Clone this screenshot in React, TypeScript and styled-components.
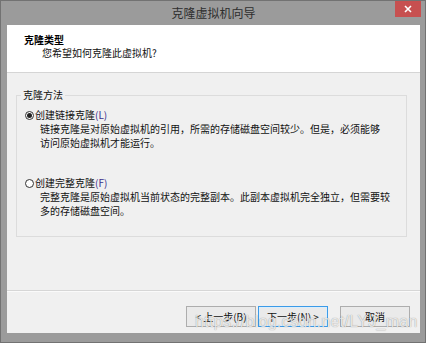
import React from 'react';
import styled, { createGlobalStyle } from 'styled-components';

const GlobalStyle = createGlobalStyle`
  html, body {
    margin: 0;
    padding: 0;
    background: #ffffff;
  }
  * {
    box-sizing: border-box;
  }
`;

const UI_FONT = `"Noto Sans CJK SC", "Noto Sans", sans-serif`;

// 窗口外框
const Window = styled.div`
  width: 426px;
  height: 343px;
  background: #9b9b9b;
  border: 1px solid #727272;
  padding: 0 5px 9px 6px;
  display: flex;
  flex-direction: column;
  font-family: ${UI_FONT};
`;

const TitleBar = styled.div`
  height: 24px;
  display: grid;
  grid-template-columns: 1fr auto 1fr;
  align-items: start;
`;

const Title = styled.div`
  grid-column: 2;
  font-size: 12px;
  line-height: 24px;
  color: #2e2e2e;
`;

const CloseButton = styled.button`
  grid-column: 3;
  justify-self: end;
  width: 26px;
  height: 16px;
  margin-right: -1px;
  border: none;
  padding: 0;
  background: #c75050;
  display: flex;
  align-items: center;
  justify-content: center;
`;

const Client = styled.div`
  flex: 1;
  display: flex;
  flex-direction: column;
  background: #f0f0f0;
`;

const Header = styled.div`
  height: 48px;
  background: #ffffff;
  border-bottom: 1px solid #d5d5d5;
  padding: 8px 0 0 17px;
`;

const HeaderTitle = styled.div`
  font-size: 10px;
  line-height: 13px;
  font-weight: 700;
  color: #000;
`;

const HeaderSub = styled.div`
  font-size: 10px;
  line-height: 13px;
  color: #111;
  padding-left: 18px;
`;

const Body = styled.div`
  flex: 1;
  padding: 15px 13px 0 9px;
`;

const GroupBox = styled.fieldset`
  margin: 0;
  height: 149px;
  border: 1px solid #dcdcdc;
  padding: 6px 10px 0 8px;
`;

const Legend = styled.legend`
  font-size: 10px;
  line-height: 14px;
  color: #111;
  padding: 0 2px;
  margin-left: -4px;
`;

const Option = styled.div<{ $gap?: number }>`
  margin-top: ${(p) => p.$gap ?? 0}px;
`;

const RadioRow = styled.div`
  display: flex;
  align-items: center;
  gap: 1px;
  font-size: 10px;
  line-height: 14px;
  color: #111;
`;

const RadioCircle = styled.span<{ $checked?: boolean }>`
  width: 9px;
  height: 9px;
  border-radius: 50%;
  border: 1px solid #333;
  background: #fff;
  display: flex;
  align-items: center;
  justify-content: center;
  &::after {
    content: '';
    width: 5px;
    height: 5px;
    border-radius: 50%;
    background: ${(p) => (p.$checked ? '#222' : 'transparent')};
  }
`;

const Key = styled.span`
  color: #3b2f8c;
`;

const Desc = styled.div`
  font-size: 10px;
  line-height: 14px;
  color: #111;
  padding-left: 15px;
`;

const Separator = styled.div`
  height: 2px;
  border-top: 1px solid #d6d6d6;
  border-bottom: 1px solid #fafafa;
`;

const Footer = styled.div`
  position: relative;
  height: 41px;
  display: flex;
  justify-content: flex-end;
  align-items: flex-start;
  padding: 14px 10px 0 0;
`;

const Button = styled.button<{ $primary?: boolean; $gap?: number }>`
  width: 70px;
  height: 21px;
  margin-left: ${(p) => p.$gap ?? 0}px;
  padding: 0;
  font-family: ${UI_FONT};
  font-size: 10px;
  color: #111;
  background: #eaeaea;
  border: 1px solid ${(p) => (p.$primary ? '#3c9be8' : '#adadad')};
  box-shadow: ${(p) => (p.$primary ? 'inset 0 0 0 1px #dbeefc' : 'none')};
`;

// 截图上的水印，叠在按钮上
const Watermark = styled.div`
  position: absolute;
  left: 188px;
  top: 21px;
  font-family: "Liberation Sans", Arial, sans-serif;
  font-size: 16px;
  line-height: 18px;
  letter-spacing: 0.3px;
  color: rgba(255, 255, 255, 0.8);
  text-shadow: 0 0 1px rgba(0, 0, 0, 0.45);
  pointer-events: none;
  white-space: nowrap;
`;

export default function App() {
  return (
    <>
      <GlobalStyle />
      <Window>
        <TitleBar>
          <Title>克隆虚拟机向导</Title>
          <CloseButton aria-label="关闭">
            <svg width="8" height="8" viewBox="0 0 8 8">
              <path d="M1 1 L7 7 M7 1 L1 7" stroke="#fff" strokeWidth="1.6" />
            </svg>
          </CloseButton>
        </TitleBar>
        <Client>
          <Header>
            <HeaderTitle>克隆类型</HeaderTitle>
            <HeaderSub>您希望如何克隆此虚拟机?</HeaderSub>
          </Header>
          <Body>
            <GroupBox>
              <Legend>克隆方法</Legend>
              <Option>
                <RadioRow>
                  <RadioCircle $checked />
                  <span>
                    创建链接克隆<Key>(L)</Key>
                  </span>
                </RadioRow>
                <Desc>链接克隆是对原始虚拟机的引用，所需的存储磁盘空间较少。但是，必须能够</Desc>
                <Desc>访问原始虚拟机才能运行。</Desc>
              </Option>
              <Option $gap={26}>
                <RadioRow>
                  <RadioCircle />
                  <span>
                    创建完整克隆<Key>(F)</Key>
                  </span>
                </RadioRow>
                <Desc>完整克隆是原始虚拟机当前状态的完整副本。此副本虚拟机完全独立，但需要较</Desc>
                <Desc>多的存储磁盘空间。</Desc>
              </Option>
            </GroupBox>
          </Body>
          <Separator />
          <Footer>
            <Button>&lt; 上一步(B)</Button>
            <Button $primary $gap={2}>下一步(N) &gt;</Button>
            <Button $gap={12}>取消</Button>
            <Watermark>https://blog.csdn.net/LYJ_man</Watermark>
          </Footer>
        </Client>
      </Window>
    </>
  );
}
